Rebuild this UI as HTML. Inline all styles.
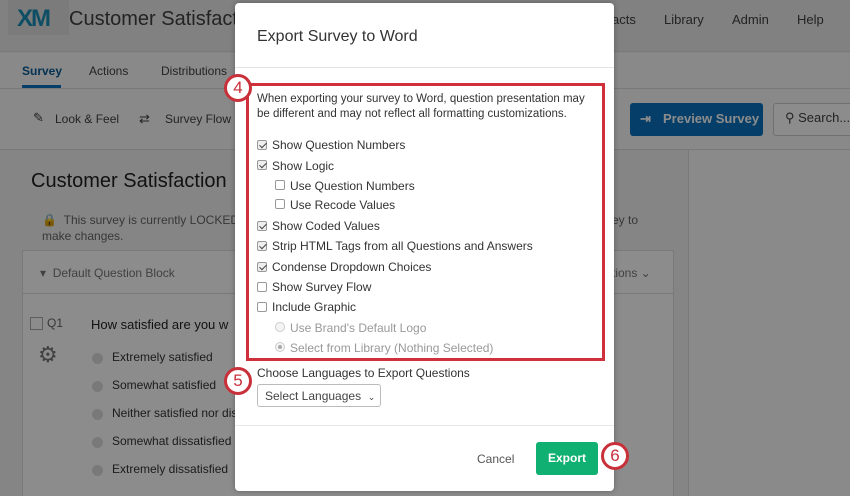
<!DOCTYPE html>
<html><head><style>
*{margin:0;padding:0;box-sizing:border-box}
html,body{width:850px;height:496px;overflow:hidden}
body{position:relative;background:#f2f2f2;font-family:"Liberation Sans",sans-serif;color:#333}
.a{position:absolute;white-space:nowrap}
.bgt{color:#404040}
.cb{position:absolute;width:10px;height:10px;border:1px solid #999;border-radius:2px;background:#fff}
.cb.c{background:#eee}
.cb.c:after{content:"";position:absolute;left:3px;top:0px;width:3px;height:6px;border:solid #444;border-width:0 1.5px 1.5px 0;transform:rotate(45deg)}
.lbl{position:absolute;font-size:12px;color:#333;white-space:nowrap}
.num{position:absolute;width:28px;height:28px;border:3px solid #c8303a;border-radius:50%;background:#fff;color:#c8303a;font-size:17px;text-align:center;line-height:22px}
.rad{position:absolute;width:11px;height:11px;border-radius:50%;background:#ddd}
</style></head><body>
<div class="a" style="left:0;top:0;width:850px;height:496px;background:#f2f2f2"></div>
<div class="a" style="left:0;top:0;width:850px;height:52px;background:#ebebeb;border-bottom:1px solid #ddd"></div>
<div class="a" style="left:8px;top:0;width:61px;height:35px;background:#e0e0e0"></div>
<div class="a" style="left:17px;top:5px;font-size:24px;font-weight:bold;color:#1a8fb8;letter-spacing:-2px">XM</div>
<div class="a bgt" style="left:69px;top:8px;font-size:20px">Customer Satisfacti</div>
<div class="a bgt" style="left:612px;top:12px;font-size:13px">acts</div>
<div class="a bgt" style="left:664px;top:12px;font-size:13px">Library</div>
<div class="a bgt" style="left:732px;top:12px;font-size:13px">Admin</div>
<div class="a bgt" style="left:797px;top:12px;font-size:13px">Help</div>
<div class="a" style="left:0;top:53px;width:850px;height:36px;background:#fafafa"></div>
<div class="a" style="left:0;top:88px;width:850px;height:1px;background:#ddd"></div>
<div class="a" style="left:22px;top:64px;font-size:12px;font-weight:bold;color:#0a5c96">Survey</div>
<div class="a" style="left:22px;top:85px;width:39px;height:3px;background:#0a74c0"></div>
<div class="a bgt" style="left:89px;top:64px;font-size:12px">Actions</div>
<div class="a bgt" style="left:161px;top:64px;font-size:12px">Distributions</div>
<div class="a" style="left:0;top:89px;width:850px;height:60px;background:#fafafa"></div>
<div class="a bgt" style="left:55px;top:112px;font-size:12px">Look &amp; Feel</div>
<div class="a bgt" style="left:33px;top:110px;font-size:13px">✎</div>
<div class="a bgt" style="left:139px;top:111px;font-size:13px">⇄</div>
<div class="a bgt" style="left:165px;top:112px;font-size:12px">Survey Flow</div>
<div class="a" style="left:0;top:149px;width:850px;height:1px;background:#ddd"></div>
<div class="a" style="left:630px;top:103px;width:133px;height:33px;background:#0a74c0;border-radius:3px"></div>
<div class="a" style="left:640px;top:111px;font-size:13px;color:#fff;font-weight:bold">⇥</div>
<div class="a" style="left:663px;top:111px;font-size:13px;color:#fff;font-weight:bold">Preview Survey</div>
<div class="a" style="left:773px;top:103px;width:90px;height:33px;border:1px solid #ccc;border-radius:3px;background:#fff"></div>
<div class="a bgt" style="left:785px;top:110px;font-size:13px">⚲ Search...</div>
<div class="a" style="left:688px;top:150px;width:1px;height:346px;background:#ddd"></div>
<div class="a" style="left:689px;top:150px;width:161px;height:346px;background:#fcfcfc"></div>
<div class="a" style="left:31px;top:170px;font-size:20px;color:#222">Customer Satisfaction</div>
<div class="a" style="left:42px;top:213px;font-size:12px;color:#666">🔒&nbsp;&nbsp;This survey is currently LOCKED</div>
<div class="a" style="left:42px;top:229px;font-size:12px;color:#666">make changes.</div>
<div class="a" style="left:612px;top:213px;font-size:12px;color:#666">ey to</div>
<div class="a" style="left:22px;top:250px;width:652px;height:260px;border:1px solid #ddd;background:#fff"></div>
<div class="a" style="left:22px;top:293px;width:652px;height:1px;background:#ddd"></div>
<div class="a" style="left:40px;top:266px;font-size:12px;color:#777">▾&nbsp;&nbsp;Default Question Block</div>
<div class="a" style="left:612px;top:266px;font-size:12px;color:#777">tions ⌄</div>
<div class="a" style="left:30px;top:317px;width:13px;height:13px;border:1px solid #aaa"></div>
<div class="a" style="left:47px;top:316px;font-size:12px;color:#666">Q1</div>
<div class="a" style="left:38px;top:342px;font-size:22px;color:#777">⚙</div>
<div class="a" style="left:91px;top:317px;font-size:13px;color:#222">How satisfied are you w</div>
<div class="rad" style="left:92px;top:353px"></div><div class="a" style="left:112px;top:350px;font-size:12px;color:#333">Extremely satisfied</div>
<div class="rad" style="left:92px;top:381px"></div><div class="a" style="left:112px;top:378px;font-size:12px;color:#333">Somewhat satisfied</div>
<div class="rad" style="left:92px;top:409px"></div><div class="a" style="left:112px;top:406px;font-size:12px;color:#333">Neither satisfied nor dis</div>
<div class="rad" style="left:92px;top:437px"></div><div class="a" style="left:112px;top:434px;font-size:12px;color:#333">Somewhat dissatisfied</div>
<div class="rad" style="left:92px;top:465px"></div><div class="a" style="left:112px;top:462px;font-size:12px;color:#333">Extremely dissatisfied</div>

<!-- overlay -->
<div class="a" style="left:0;top:0;width:850px;height:496px;background:rgba(0,0,0,0.45)"></div>

<!-- modal -->
<div class="a" style="left:235px;top:3px;width:379px;height:488px;background:#fff;border-radius:4px;box-shadow:0 0 6px rgba(0,0,0,.3)"></div>
<div class="a" style="left:257px;top:28px;font-size:16px;color:#333">Export Survey to Word</div>
<div class="a" style="left:235px;top:67px;width:379px;height:1px;background:#e3e3e3"></div>
<div class="a" style="left:246px;top:83px;width:359px;height:278px;border:3px solid #d0303c"></div>
<div class="a" style="left:257px;top:92px;font-size:11.5px;color:#333;line-height:15px">When exporting your survey to Word, question presentation may<br>be different and may not reflect all formatting customizations.</div>
<div class="cb c" style="left:257px;top:140px"></div><div class="lbl" style="left:272px;top:138px">Show Question Numbers</div>
<div class="cb c" style="left:257px;top:160px"></div><div class="lbl" style="left:272px;top:159px">Show Logic</div>
<div class="cb" style="left:275px;top:180px"></div><div class="lbl" style="left:290px;top:179px">Use Question Numbers</div>
<div class="cb" style="left:275px;top:199px"></div><div class="lbl" style="left:290px;top:198px">Use Recode Values</div>
<div class="cb c" style="left:257px;top:221px"></div><div class="lbl" style="left:272px;top:219px">Show Coded Values</div>
<div class="cb c" style="left:257px;top:241px"></div><div class="lbl" style="left:272px;top:239px">Strip HTML Tags from all Questions and Answers</div>
<div class="cb c" style="left:257px;top:262px"></div><div class="lbl" style="left:272px;top:260px">Condense Dropdown Choices</div>
<div class="cb" style="left:257px;top:282px"></div><div class="lbl" style="left:272px;top:280px">Show Survey Flow</div>
<div class="cb" style="left:257px;top:302px"></div><div class="lbl" style="left:272px;top:300px">Include Graphic</div>
<div class="a" style="left:275px;top:322px;width:10px;height:10px;border-radius:50%;border:1px solid #ccc;background:#f4f4f4"></div><div class="lbl" style="left:290px;top:321px;color:#999">Use Brand's Default Logo</div>
<div class="a" style="left:275px;top:342px;width:10px;height:10px;border-radius:50%;border:1px solid #ccc;background:#f4f4f4"><div style="position:absolute;left:2px;top:2px;width:4px;height:4px;border-radius:50%;background:#aaa"></div></div><div class="lbl" style="left:290px;top:341px;color:#999">Select from Library (Nothing Selected)</div>
<div class="num" style="left:224px;top:74px">4</div>
<div class="lbl" style="left:257px;top:366px">Choose Languages to Export Questions</div>
<div class="num" style="left:224px;top:367px">5</div>
<div class="a" style="left:257px;top:384px;width:124px;height:23px;border:1px solid #bbb;border-radius:3px"></div>
<div class="lbl" style="left:265px;top:389px;color:#444">Select Languages&nbsp;&nbsp;<span style="font-size:9px">⌄</span></div>
<div class="a" style="left:235px;top:425px;width:379px;height:1px;background:#e8e8e8"></div>
<div class="lbl" style="left:477px;top:452px;color:#555">Cancel</div>
<div class="a" style="left:536px;top:442px;width:62px;height:33px;background:#0fb071;border-radius:3px;color:#fff;font-size:12px;font-weight:bold;text-align:center;line-height:33px">Export</div>
<div class="num" style="left:601px;top:442px">6</div>
</body></html>
